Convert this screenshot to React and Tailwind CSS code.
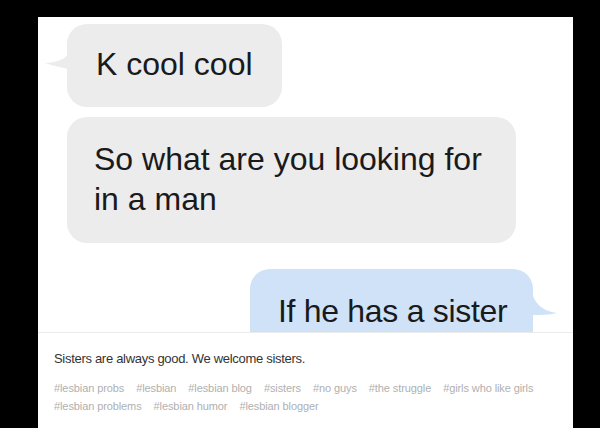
const tags = [
  '#lesbian probs',
  '#lesbian',
  '#lesbian blog',
  '#sisters',
  '#no guys',
  '#the struggle',
  '#girls who like girls',
  '#lesbian problems',
  '#lesbian humor',
  '#lesbian blogger',
];

function LeftTail() {
  return (
    <svg className="absolute left-[-24px] top-[22px]" width="28" height="28" viewBox="0 0 28 28">
      <path d="M28 0 C27 10 20 16 2 17 C10 20 18 21 28 24 Z" fill="#ececec" />
    </svg>
  );
}

function RightTail() {
  return (
    <svg className="absolute right-[-27px] top-[22px]" width="30" height="26" viewBox="0 0 30 26">
      <path d="M2 0 C3 9 10 20 27 22 C19 24 10 24 2 24 Z" fill="#cfe2f7" />
    </svg>
  );
}

export default function App() {
  return (
    <div className="w-[600px] h-[428px] bg-black pt-[17px] pl-[38px] overflow-hidden">
      <div className="w-[535px] h-[411px] bg-white" style={{ fontFamily: '"Liberation Sans", Arial, sans-serif' }}>
        {/* screenshot of the chat */}
        <div className="h-[316px] overflow-hidden border-b border-[#ebebeb] text-[32px] leading-[40px] text-[#1a1a1a]">
          <div className="relative ml-[29px] mt-[7px] w-[215px] rounded-[20px] bg-[#ececec] pl-[29px] pt-[20px] pb-[23px]">
            <LeftTail />
            K cool cool
          </div>
          <div className="ml-[29px] mt-[10px] w-[449px] rounded-[20px] bg-[#ececec] pl-[27px] pt-[22px] pb-[24px]">
            So what are you looking for
            <br />
            in a man
          </div>
          <div className="relative ml-[212px] mt-[26px] w-[283px] rounded-t-[20px] bg-[#cfe2f7] pl-[28px] pt-[22px] pb-[24px] tracking-[-0.3px]">
            <RightTail />
            If he has a sister
          </div>
        </div>

        {/* caption */}
        <div className="px-[16px] pt-[16px]">
          <p className="text-[13px] leading-[20px] tracking-[-0.3px] text-[#333333]">Sisters are always good. We welcome sisters.</p>
          <div className="mt-[10px] flex flex-wrap gap-x-[12px] text-[11px] leading-[18px] tracking-[-0.1px] text-[#b0b0b0]">
            {tags.map((t) => (
              <span key={t}>{t}</span>
            ))}
          </div>
        </div>
      </div>
    </div>
  );
}
